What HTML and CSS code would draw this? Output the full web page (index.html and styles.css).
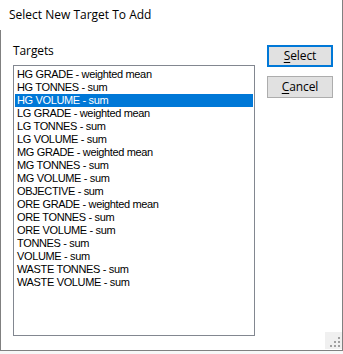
FILE: index.html
```html
<!DOCTYPE html>
<html>
<head>
<meta charset="utf-8">
<link rel="stylesheet" href="styles.css">
</head>
<body>
<div class="window">
  <div class="titlebar">Select New Target To Add</div>
  <div class="content">
    <div class="left">
      <div class="label">Targets</div>
      <ul class="listbox">
        <li>HG GRADE - weighted mean</li>
        <li>HG TONNES - sum</li>
        <li class="selected">HG VOLUME - sum</li>
        <li>LG GRADE - weighted mean</li>
        <li>LG TONNES - sum</li>
        <li>LG VOLUME - sum</li>
        <li>MG GRADE - weighted mean</li>
        <li>MG TONNES - sum</li>
        <li>MG VOLUME - sum</li>
        <li>OBJECTIVE - sum</li>
        <li>ORE GRADE - weighted mean</li>
        <li>ORE TONNES - sum</li>
        <li>ORE VOLUME - sum</li>
        <li>TONNES - sum</li>
        <li>VOLUME - sum</li>
        <li>WASTE TONNES - sum</li>
        <li>WASTE VOLUME - sum</li>
      </ul>
    </div>
    <div class="buttons">
      <button class="btn default"><u>S</u>elect</button>
      <button class="btn"><u>C</u>ancel</button>
    </div>
    <div class="grip">
      <span class="dot d1"></span>
      <span class="dot d2"></span>
      <span class="dot d3"></span>
      <span class="dot d4"></span>
      <span class="dot d5"></span>
      <span class="dot d6"></span>
    </div>
  </div>
</div>
</body>
</html>
```

FILE: styles.css
```css
html, body {
  margin: 0;
  padding: 0;
  background: #f7f7f7;
}
.window {
  width: 343px;
  height: 351px;
  box-sizing: border-box;
  background: #ffffff;
  display: flex;
  flex-direction: column;
  font-family: "Open Sans", "Noto Sans", sans-serif;
  font-size: 12px;
  color: #000;
}
.titlebar {
  height: 30px;
  line-height: 30px;
  padding-left: 9px;
  border-right: 1px solid #808080;
  box-sizing: border-box;
  font-size: 12px;
}
.content {
  position: relative;
  flex: 1;
  display: flex;
  border-left: 1px solid #808080;
  border-right: 1px solid #808080;
  border-bottom: 1px solid #808080;
}
.left {
  margin-left: 12px;
  padding-top: 12px;
  display: flex;
  flex-direction: column;
}
.label {
  height: 23px;
  line-height: 17px;
  letter-spacing: -0.1px;
}
.listbox {
  list-style: none;
  margin: 0;
  padding: 2px 1px;
  width: 242px;
  height: 271px;
  box-sizing: border-box;
  border: 1px solid #828790;
  font-family: "Liberation Sans", Arial, sans-serif;
  font-size: 11px;
  letter-spacing: -0.35px;
}
.listbox li {
  height: 13px;
  line-height: 13px;
  padding-left: 2px;
  white-space: nowrap;
}
.listbox li.selected {
  background: #0078d7;
  color: #fff;
}
.buttons {
  margin-left: 12px;
  padding-top: 15px;
  display: flex;
  flex-direction: column;
  gap: 9px;
}
.btn {
  width: 66px;
  height: 22px;
  box-sizing: border-box;
  background: #e1e1e1;
  border: 1px solid #adadad;
  font-family: "Open Sans", "Noto Sans", sans-serif;
  font-size: 12px;
  letter-spacing: -0.1px;
  color: #000;
  padding: 0;
  line-height: 18px;
}
.btn.default {
  border: 2px solid #0078d7;
}
.btn u {
  text-decoration-thickness: 1px;
  text-underline-offset: 2px;
}
.grip {
  position: absolute;
  right: 0;
  bottom: 1px;
  width: 17px;
  height: 17px;
  background: #f0f0f0;
}
.dot {
  position: absolute;
  width: 2px;
  height: 2px;
  background: #a0a0a0;
}
.d1 { left: 13px; top: 5px; }
.d2 { left: 9px; top: 9px; }
.d3 { left: 13px; top: 9px; }
.d4 { left: 5px; top: 13px; }
.d5 { left: 9px; top: 13px; }
.d6 { left: 13px; top: 13px; }
```
